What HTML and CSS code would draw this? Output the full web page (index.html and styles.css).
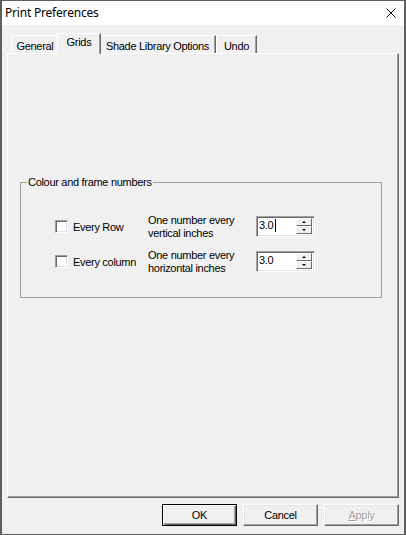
FILE: index.html
```html
<!DOCTYPE html>
<html>
<head>
<meta charset="utf-8">
<link rel="stylesheet" href="styles.css">
</head>
<body>
<div class="window">
  <div class="titlebar">
    <span class="title">Print Preferences</span>
    <svg class="close" viewBox="0 0 10 10" width="10" height="10"><path d="M0.5 0.5 L9.5 9.5 M9.5 0.5 L0.5 9.5" stroke="#000" stroke-width="1" fill="none"/></svg>
  </div>
  <div class="body">
    <div class="tabs">
      <div class="tab t-general">General</div>
      <div class="tab t-grids active">Grids</div>
      <div class="tab t-shade">Shade Library Options</div>
      <div class="tab t-undo">Undo</div>
    </div>
    <div class="panel">
      <fieldset class="group">
        <legend>Colour and frame numbers</legend>
        <div class="rows">
          <div class="row">
            <label class="check"><span class="box"></span><span>Every Row</span></label>
            <div class="desc">One number every<br>vertical inches</div>
            <div class="spin">
              <span class="val">3.0<span class="caret"></span></span>
              <div class="btns"><div class="sb up"><i></i></div><div class="sb down"><i></i></div></div>
            </div>
          </div>
          <div class="row">
            <label class="check"><span class="box"></span><span>Every column</span></label>
            <div class="desc">One number every<br>horizontal inches</div>
            <div class="spin">
              <span class="val">3.0</span>
              <div class="btns"><div class="sb up"><i></i></div><div class="sb down"><i></i></div></div>
            </div>
          </div>
        </div>
      </fieldset>
    </div>
    <div class="buttons">
      <div class="btn default">OK</div>
      <div class="btn">Cancel</div>
      <div class="btn disabled"><u>A</u>pply</div>
    </div>
  </div>
</div>
</body>
</html>
```
FILE: styles.css
```css
html, body {
  margin: 0;
  padding: 0;
}
body {
  width: 406px;
  height: 535px;
  overflow: hidden;
  background: #f0f0f0;
  font-family: "Liberation Sans", Arial, sans-serif;
  font-size: 11px;
  letter-spacing: -0.3px;
  color: #000;
}
.window {
  box-sizing: border-box;
  width: 406px;
  height: 535px;
  border-style: solid;
  border-color: #5f5f5f;
  border-width: 1px 2px 1px 2px;
  background: #f0f0f0;
  display: flex;
  flex-direction: column;
}
.titlebar {
  height: 24px;
  flex: none;
  background: #fff;
  display: flex;
  align-items: center;
  padding-left: 3px;
}
.title {
  font-family: "Noto Sans", "Segoe UI", sans-serif;
  font-size: 12px;
  letter-spacing: -0.2px;
  line-height: 16px;
}
.close {
  margin-left: auto;
  margin-right: 8px;
  display: block;
}
.body {
  flex: 1;
  padding: 0 5px;
  display: flex;
  flex-direction: column;
}
.tabs {
  height: 28px;
  flex: none;
  display: flex;
  align-items: flex-end;
  padding-left: 4px;
}
.tab {
  box-sizing: border-box;
  height: 18px;
  border-top: 1px solid #fff;
  border-left: 1px solid #fff;
  border-right: 1px solid #696969;
  box-shadow: inset -1px 0 0 #a0a0a0;
  text-align: center;
  line-height: 13px;
  padding-top: 4px;
  white-space: nowrap;
}
.t-general { width: 48px; }
.t-grids { width: 40px; }
.t-shade { width: 117px; }
.t-undo { width: 41px; }
.tab.active {
  position: relative;
  z-index: 1;
  height: 21px;
  width: 44px;
  margin: 0 -2px -1px -2px;
  padding-top: 2px;
  background: #f0f0f0;
}
.panel {
  box-sizing: border-box;
  height: 445px;
  flex: none;
  border: 1px solid;
  border-color: #fff #696969 #696969 #fff;
  box-shadow: inset -1px -1px 0 #a0a0a0;
  padding: 122px 16px 0 12px;
}
.group {
  margin: 0;
  padding: 0 0 18px 0;
  min-width: 0;
  border: 1px solid #a0a0a0;
}
.group legend {
  margin-left: 6px;
  padding: 0 1px;
  line-height: 13px;
}
.rows {
  padding-top: 20px;
}
.row {
  height: 35px;
  display: flex;
  align-items: center;
  padding-left: 34px;
}
.check {
  width: 93px;
  display: flex;
  align-items: center;
  white-space: nowrap;
}
.box {
  box-sizing: border-box;
  width: 13px;
  height: 13px;
  margin-right: 5px;
  background: #fff;
  border: 1px solid;
  border-color: #a0a0a0 #fff #fff #a0a0a0;
  box-shadow: inset 1px 1px 0 #696969, inset -1px -1px 0 #e3e3e3;
}
.desc {
  width: 108px;
  line-height: 13px;
  white-space: nowrap;
}
.spin {
  box-sizing: border-box;
  width: 59px;
  height: 21px;
  background: #fff;
  border: 1px solid;
  border-color: #a0a0a0 #fff #fff #a0a0a0;
  box-shadow: inset 1px 1px 0 #696969, inset -1px -1px 0 #e3e3e3;
  padding: 1px 2px 2px 1px;
  display: flex;
}
.val {
  line-height: 13px;
  padding-top: 1px;
  padding-left: 1px;
  display: flex;
  align-items: flex-start;
}
.caret {
  display: inline-block;
  width: 1px;
  height: 13px;
  background: #000;
  margin-left: 2px;
}
.btns {
  margin-left: auto;
  width: 16px;
  display: flex;
  flex-direction: column;
}
.sb {
  box-sizing: border-box;
  flex: 1;
  background: #f0f0f0;
  border: 1px solid;
  border-color: #fff #696969 #696969 #fff;
  display: flex;
  align-items: center;
  justify-content: center;
}
.sb i {
  display: block;
  width: 0;
  height: 0;
  border-left: 2px solid transparent;
  border-right: 2px solid transparent;
}
.up i { border-bottom: 2px solid #000; }
.down i { border-top: 2px solid #000; }
.buttons {
  flex: 1;
  display: flex;
  justify-content: flex-end;
  align-items: flex-start;
  gap: 6px;
  padding-top: 6px;
}
.btn {
  box-sizing: border-box;
  width: 75px;
  height: 22px;
  background: #f0f0f0;
  border: 1px solid;
  border-color: #fff #696969 #696969 #fff;
  box-shadow: inset -1px -1px 0 #a0a0a0, inset 1px 1px 0 #e3e3e3;
  display: flex;
  align-items: center;
  justify-content: center;
  line-height: 13px;
}
.btn.default {
  border: 1px solid #000;
  box-shadow: inset 1px 1px 0 #fff, inset -1px -1px 0 #696969, inset -2px -2px 0 #a0a0a0;
}
.btn.disabled {
  color: #a0a0a0;
  text-shadow: 1px 1px 0 #fff;
}
```
